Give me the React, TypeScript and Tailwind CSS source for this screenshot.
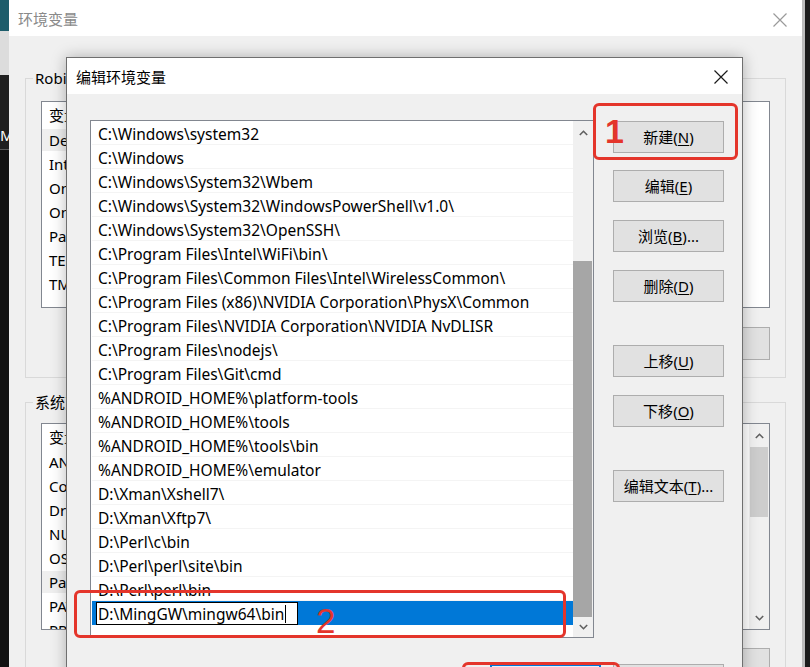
const FONT = "font-['Noto_Sans','Noto_Sans_CJK_SC',sans-serif]"

const PATHS = [
  'C:\\Windows\\system32',
  'C:\\Windows',
  'C:\\Windows\\System32\\Wbem',
  'C:\\Windows\\System32\\WindowsPowerShell\\v1.0\\',
  'C:\\Windows\\System32\\OpenSSH\\',
  'C:\\Program Files\\Intel\\WiFi\\bin\\',
  'C:\\Program Files\\Common Files\\Intel\\WirelessCommon\\',
  'C:\\Program Files (x86)\\NVIDIA Corporation\\PhysX\\Common',
  'C:\\Program Files\\NVIDIA Corporation\\NVIDIA NvDLISR',
  'C:\\Program Files\\nodejs\\',
  'C:\\Program Files\\Git\\cmd',
  '%ANDROID_HOME%\\platform-tools',
  '%ANDROID_HOME%\\tools',
  '%ANDROID_HOME%\\tools\\bin',
  '%ANDROID_HOME%\\emulator',
  'D:\\Xman\\Xshell7\\',
  'D:\\Xman\\Xftp7\\',
  'D:\\Perl\\c\\bin',
  'D:\\Perl\\perl\\site\\bin',
  'D:\\Perl\\perl\\bin',
]

const USER_VARS = ['DevEco Studio', 'IntelliJ IDEA', 'OneDrive', 'OneDriveConsumer', 'Path', 'TEMP', 'TMP']
const SYS_VARS = ['ANDROID_HOME', 'ComSpec', 'DriverData', 'NUMBER_OF_PROCESSORS', 'OS', 'Path', 'PATHEXT', 'PROCESSOR_ARCHITECTURE']

function CloseIcon({ color }: { color: string }) {
  return (
    <svg width="14" height="14" viewBox="0 0 14 14" fill="none" stroke={color} strokeWidth="1.2">
      <path d="M0.5 0.5 L13.5 13.5 M13.5 0.5 L0.5 13.5" />
    </svg>
  )
}

function Chevron({ up }: { up?: boolean }) {
  return (
    <svg width="9" height="6" viewBox="0 0 9 6" fill="none" stroke="#606060" strokeWidth="1.6">
      <path d={up ? 'M0.8 5 L4.5 1.3 L8.2 5' : 'M0.8 1 L4.5 4.7 L8.2 1'} />
    </svg>
  )
}

// Win32-style push button; `accel` is the underlined access key
function Btn({ pre, accel, post = '', className = '' }: { pre: string; accel: string; post?: string; className?: string }) {
  return (
    <div
      className={`flex h-[32px] w-[111px] items-center justify-center border border-[#adadad] bg-[#e1e1e1] pt-[1px] text-[15px] text-black ${className}`}
    >
      {pre}(<span className="underline underline-offset-2">{accel}</span>){post}
    </div>
  )
}

// variable list of the outer window (mostly hidden under the dialog)
function VarRows({ vars, selected, headH }: { vars: string[]; selected: string; headH: string }) {
  return (
    <div className="flex-1 overflow-hidden">
      <div className={`flex items-center px-[7px] text-[15px] ${headH}`}>
        <span className="w-[200px]">变量</span>
        <span>值</span>
      </div>
      {vars.map((v) => (
        <div key={v} className="flex h-[24px] items-center whitespace-nowrap text-[15px]">
          <span className={`w-[200px] px-[7px] ${v === selected ? 'bg-[#efefef]' : ''}`}>{v}</span>
        </div>
      ))}
    </div>
  )
}

export default function App() {
  return (
    <div className={`relative flex h-[667px] w-[810px] flex-col overflow-hidden bg-[#151515] text-black ${FONT}`}>
      <div className="h-[2px] bg-[#2b2b2b]" />
      <div className="flex flex-1">
        {/* desktop sliver on the left */}
        <div className="flex w-[9px] flex-col overflow-hidden">
          <div className="h-[31px] bg-[#1d5d6b]" />
          <div className="h-[44px] bg-[#dcdcdc]" />
          <div className="flex h-[75px] items-end overflow-visible border-b border-[#5a5a5a] bg-[#1f1f1f] pb-[6px]">
            <span className="whitespace-nowrap text-[15px] leading-none text-white">Mi</span>
          </div>
          <div className="flex-1 bg-[#121212]" />
        </div>

        {/* outer 环境变量 window */}
        <div className="flex w-[793px] flex-col bg-[#f0f0f0]">
          <div className="flex h-[36px] items-center justify-between bg-white pl-[9px] pr-[15px] pt-[3px]">
            <span className="text-[15px] text-[#8a8a8a]">环境变量</span>
            <CloseIcon color="#9a9a9a" />
          </div>
          <div className="flex flex-col px-[16px]">
            <fieldset className="mt-[31px] border border-[#d9d9d9] px-[15px] pb-[17px]">
              <legend className="ml-[-8px] px-[2px] text-[15px] leading-[22px]">Robin 的用户变量(U)</legend>
              <div className="mt-[12px] flex h-[207px] border border-[#828790] bg-white pt-[1px]">
                <VarRows vars={USER_VARS} selected="DevEco Studio" headH="h-[25px]" />
              </div>
              <div className="mt-[19px] flex justify-end gap-[10px]">
                <div className="h-[33px] w-[110px] border border-[#adadad] bg-[#e1e1e1]" />
                <div className="h-[33px] w-[110px] border border-[#adadad] bg-[#e1e1e1]" />
                <div className="h-[33px] w-[110px] border border-[#adadad] bg-[#e1e1e1]" />
              </div>
            </fieldset>
            <fieldset className="mt-[13px] border border-[#d9d9d9] px-[15px] pb-[17px]">
              <legend className="ml-[-8px] px-[2px] text-[15px] leading-[22px]">系统变量(S)</legend>
              <div className="mt-[10px] flex h-[207px] border border-[#828790] bg-white">
                <VarRows vars={SYS_VARS} selected="Path" headH="h-[26px]" />
                <div className="flex w-[20px] flex-col bg-[#f0f0f0]">
                  <div className="flex h-[23px] items-center justify-center">
                    <Chevron up />
                  </div>
                  <div className="mx-[1px] h-[70px] bg-[#cdcdcd]" />
                  <div className="flex-1" />
                  <div className="flex h-[23px] items-center justify-center">
                    <Chevron />
                  </div>
                </div>
              </div>
              <div className="mt-[18px] flex justify-end gap-[10px]">
                <div className="h-[33px] w-[110px] border border-[#adadad] bg-[#e1e1e1]" />
              </div>
            </fieldset>
          </div>
        </div>

        {/* desktop sliver on the right */}
        <div className="flex-1 border-l-[3px] border-[#bcbcbc] bg-[#1b1b1b]" />
      </div>

      {/* 编辑环境变量 dialog over the outer window */}
      <div className="absolute left-[66px] top-[57px] flex h-[640px] w-[677px] flex-col border border-[#6f6f6f] bg-[#f0f0f0] shadow-[0_0_14px_rgba(0,0,0,0.28)]">
        <div className="flex h-[37px] items-center justify-between bg-white pl-[9px] pr-[14px] pt-[2px]">
          <span className="text-[15px]">编辑环境变量</span>
          <CloseIcon color="#1a1a1a" />
        </div>
        <div className="flex flex-col pl-[23px] pr-[18px] pt-[26px]">
          <div className="flex">
            <div className="flex h-[518px] w-[504px] border border-[#828790] bg-white">
              <div className="flex-1 overflow-hidden pl-[1px]">
                {PATHS.map((p) => (
                  <div
                    key={p}
                    className="flex h-[24px] items-center whitespace-nowrap border-b border-[#f4f4f4] px-[6px] pt-[3px] text-[15.5px] leading-[20px]"
                  >
                    {p}
                  </div>
                ))}
                <div className="flex h-[24px] items-center bg-[#0078d7] pl-[4px]">
                  <div className="flex h-[23px] w-[202px] items-center border border-black bg-white px-[1px] pt-[2px] text-[15.5px] leading-[20px]">
                    D:\MingGW\mingw64\bin
                    <span className="ml-px h-[18px] w-px bg-black" />
                  </div>
                </div>
              </div>
              <div className="flex w-[20px] flex-col bg-[#f0f0f0]">
                <div className="flex h-[24px] items-center justify-center">
                  <Chevron up />
                </div>
                <div className="h-[116px]" />
                <div className="mr-[1px] h-[356px] bg-[#a6a6a6]" />
                <div className="flex flex-1 items-center justify-center">
                  <Chevron />
                </div>
              </div>
            </div>
            <div className="ml-[19px] flex flex-col">
              <Btn pre="新建" accel="N" className="mt-[1px]" />
              <Btn pre="编辑" accel="E" className="mt-[17px]" />
              <Btn pre="浏览" accel="B" post="..." className="mt-[18px]" />
              <Btn pre="删除" accel="D" className="mt-[18px]" />
              <Btn pre="上移" accel="U" className="mt-[43px]" />
              <Btn pre="下移" accel="O" className="mt-[18px]" />
              <Btn pre="编辑文本" accel="T" post="..." className="mt-[43px]" />
            </div>
          </div>
          <div className="mt-[26px] flex justify-end gap-[12px]">
            <div className="flex h-[32px] w-[111px] items-center justify-center border-2 border-[#0078d7] bg-[#e5f1fb] text-[15px]">
              确定
            </div>
            <div className="flex h-[32px] w-[111px] items-center justify-center border border-[#adadad] bg-[#e1e1e1] text-[15px]">
              取消
            </div>
          </div>
        </div>
      </div>

      {/* red annotation marks */}
      <div className="pointer-events-none absolute left-[593px] top-[103px] h-[57px] w-[145px] rounded-[6px] border-[3px] border-[#e4352b]" />
      <span className="absolute left-[605px] top-[114px] font-['Liberation_Sans',sans-serif] text-[34px] font-bold leading-none text-[#e4352b]">
        1
      </span>
      <div className="pointer-events-none absolute left-[74px] top-[590px] h-[48px] w-[492px] rounded-[6px] border-[3px] border-[#e4352b]" />
      <span className="absolute left-[316px] top-[603px] font-['Liberation_Sans',sans-serif] text-[35px] leading-none text-[#e4352b]">
        2
      </span>
      <div className="pointer-events-none absolute left-[462px] top-[662px] h-[30px] w-[158px] rounded-[6px] border-[3px] border-[#e4352b]" />
    </div>
  )
}
